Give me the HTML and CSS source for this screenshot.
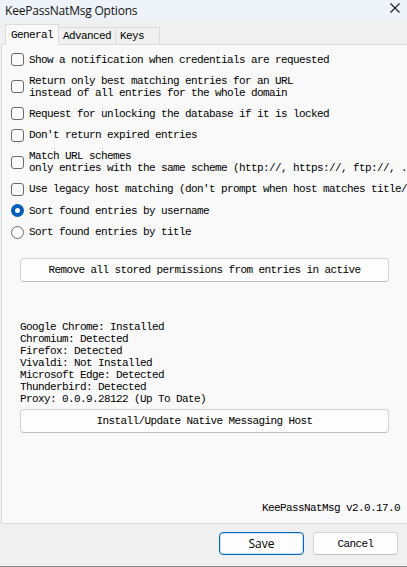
FILE: index.html
```html
<!DOCTYPE html>
<html lang="en">
<head>
    <meta charset="UTF-8">
    <meta name="viewport" content="width=device-width, initial-scale=1.0">
    <title>KeePassNatMsg Options</title>
    <link rel="stylesheet" href="styles.css">
</head>
<body>

<div class="window">
    <div class="titlebar">
        <span class="title">KeePassNatMsg Options</span>
        <svg class="close" width="10" height="10" viewBox="0 0 10 10">
            <path d="M0.5 0.5 L9.5 9.5 M9.5 0.5 L0.5 9.5" stroke="#1a1a1a" stroke-width="1.1" fill="none"/>
        </svg>
    </div>

    <div class="tabs">
        <div class="tab active">General</div>
        <div class="tab">Advanced</div>
        <div class="tab last">Keys</div>
    </div>

    <div class="panel">
        <div class="options">
            <label class="option"><span class="box"></span><span>Show a notification when credentials are requested</span></label>
            <label class="option"><span class="box"></span><span>Return only best matching entries for an URL<br>instead of all entries for the whole domain</span></label>
            <label class="option"><span class="box"></span><span>Request for unlocking the database if it is locked</span></label>
            <label class="option"><span class="box"></span><span>Don't return expired entries</span></label>
            <label class="option"><span class="box"></span><span>Match URL schemes<br>only entries with the same scheme (http://, https://, ftp://, ...)</span></label>
            <label class="option"><span class="box"></span><span>Use legacy host matching (don't prompt when host matches title/url)</span></label>
            <label class="option"><span class="radio checked"></span><span>Sort found entries by username</span></label>
            <label class="option"><span class="radio"></span><span>Sort found entries by title</span></label>
        </div>

        <button class="btn wide remove">Remove all stored permissions from entries in active</button>

        <div class="status">
            Google Chrome: Installed<br>
            Chromium: Detected<br>
            Firefox: Detected<br>
            Vivaldi: Not Installed<br>
            Microsoft Edge: Detected<br>
            Thunderbird: Detected<br>
            Proxy: 0.0.9.28122 (Up To Date)
        </div>

        <button class="btn wide">Install/Update Native Messaging Host</button>

        <div class="version">KeePassNatMsg v2.0.17.0</div>
    </div>

    <div class="footer">
        <button class="btn action save">Save</button>
        <button class="btn action">Cancel</button>
    </div>
</div>

</body>
</html>
```

FILE: styles.css
```css
body {
    margin: 0;
    width: 407px;
    height: 567px;
    overflow: hidden;
    font-family: "Liberation Mono", monospace;
    font-size: 11px;
    letter-spacing: -0.6px;
    color: #000;
}
.window {
    display: flex;
    flex-direction: column;
    height: 566px;
    background: #f0f0f0;
    border-bottom: 1px solid #8a8a8a;
}
.titlebar {
    height: 21px;
    background: #eef3f9;
    display: flex;
    align-items: center;
    justify-content: space-between;
    padding: 0 7px 0 5px;
}
.title {
    font-family: "Open Sans", sans-serif;
    font-size: 12px;
    letter-spacing: -0.2px;
    color: #111;
}
.close {
    margin-top: -5px;
}
.tabs {
    height: 23px;
    display: flex;
    align-items: flex-end;
    padding-left: 5px;
}
.tab {
    height: 16px;
    line-height: 16px;
    padding: 0 4px;
    border: 1px solid #dcdcdc;
    border-bottom: none;
    background: #f0f0f0;
}
.tab + .tab {
    border-left: none;
}
.tab.last {
    padding-right: 15px;
}
.tab.active {
    height: 20px;
    line-height: 20px;
    padding: 0 5px;
    background: #f9f9f9;
    margin-bottom: -1px;
    position: relative;
    z-index: 1;
}
.panel {
    flex: 1;
    display: flex;
    flex-direction: column;
    background: #f9f9f9;
    border: 1px solid #dcdcdc;
    border-right: none;
    margin-left: 1px;
    padding: 8px 0 9px 9px;
    line-height: 12px;
}
.options {
    display: flex;
    flex-direction: column;
    gap: 8.5px;
}
.option {
    display: flex;
    align-items: center;
    gap: 5px;
    white-space: nowrap;
}
.box, .radio {
    flex: none;
    width: 11px;
    height: 11px;
    border: 1px solid #6b6b6b;
    background: #fbfbfb;
    border-radius: 3px;
}
.radio {
    border-radius: 50%;
}
.radio.checked {
    width: 5px;
    height: 5px;
    border: 4px solid #005fb8;
    background: #fff;
}
.btn {
    font-family: "Liberation Mono", monospace;
    font-size: 11px;
    letter-spacing: -0.6px;
    color: #000;
    background: #fdfdfd;
    border: 1px solid #d3d3d3;
    border-bottom-color: #bdbdbd;
    border-radius: 4px;
    padding: 0;
}
.wide {
    width: 369px;
    height: 24px;
    margin-left: 9px;
}
.remove {
    margin-top: 19px;
}
.status {
    margin: 39px 0 4px 9px;
}
.version {
    margin-top: auto;
    text-align: right;
    padding-right: 7px;
}
.footer {
    height: 42px;
    display: flex;
    justify-content: flex-end;
    align-items: flex-start;
    gap: 9px;
    padding: 8px 9px 0 0;
    box-sizing: border-box;
}
.action {
    width: 85px;
    height: 23px;
}
.save {
    font-family: "Open Sans", sans-serif;
    font-size: 12px;
    letter-spacing: 0;
    border: 1px solid #0067c0;
    box-shadow: inset 0 0 0 1px #cfe0f3;
}
```
